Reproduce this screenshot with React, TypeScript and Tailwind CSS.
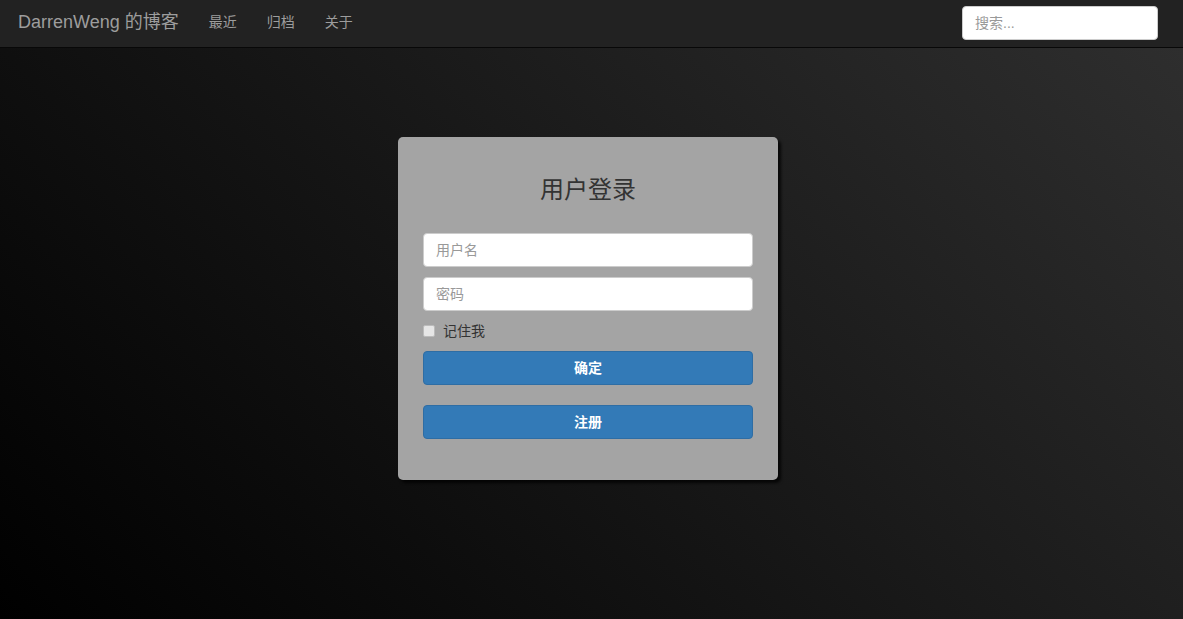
export default function App() {
  return (
    <div className="h-[619px] w-full flex flex-col overflow-hidden font-['Helvetica_Neue','Liberation_Sans','Noto_Sans_CJK_SC',sans-serif] text-[14px]">
      <nav className="h-[48px] bg-[#222222] border-b border-[#080808] flex items-center px-[18px] pb-[2px] shrink-0">
        <span className="text-[18px] text-[#9d9d9d] mr-[30px]">DarrenWeng 的博客</span>
        <div className="flex gap-[30px] text-[#9d9d9d]">
          <span>最近</span>
          <span>归档</span>
          <span>关于</span>
        </div>
        <input
          placeholder="搜索..."
          className="ml-auto mr-[7px] w-[196px] h-[34px] rounded-[4px] bg-white border border-[#cccccc] px-3 text-[14px] text-[#555] placeholder:text-[#999] outline-none"
        />
      </nav>
      <main className="flex-1 bg-linear-45/srgb from-black to-[#2e2e2e]">
        <div className="w-[380px] mt-[89px] ml-[398px] bg-[#a4a4a4] rounded-[5px] shadow-[3px_3px_3px_rgba(0,0,0,0.75)] px-[25px] pt-[39px] pb-[41px]">
          <h2 className="text-center text-[24px] text-[#333] leading-[28px] mb-[29px]">用户登录</h2>
          <input
            placeholder="用户名"
            className="block w-full h-[34px] rounded-[4px] bg-white border border-[#cccccc] px-3 text-[14px] placeholder:text-[#999] outline-none mb-[10px]"
          />
          <input
            placeholder="密码"
            type="password"
            className="block w-full h-[34px] rounded-[4px] bg-white border border-[#cccccc] px-3 text-[14px] placeholder:text-[#999] outline-none"
          />
          <label className="flex items-center gap-[8px] mt-[10px] h-[20px] text-[#333]">
            <span className="w-[12px] h-[12px] rounded-[2px] bg-[#e6e6e6] border border-[#bbb]" />
            记住我
          </label>
          <button className="block w-full h-[34px] mt-[10px] rounded-[4px] bg-[#337ab7] border border-[#2e6da4] text-white font-bold">
            确定
          </button>
          <button className="block w-full h-[34px] mt-[20px] rounded-[4px] bg-[#337ab7] border border-[#2e6da4] text-white font-bold">
            注册
          </button>
        </div>
      </main>
    </div>
  );
}
